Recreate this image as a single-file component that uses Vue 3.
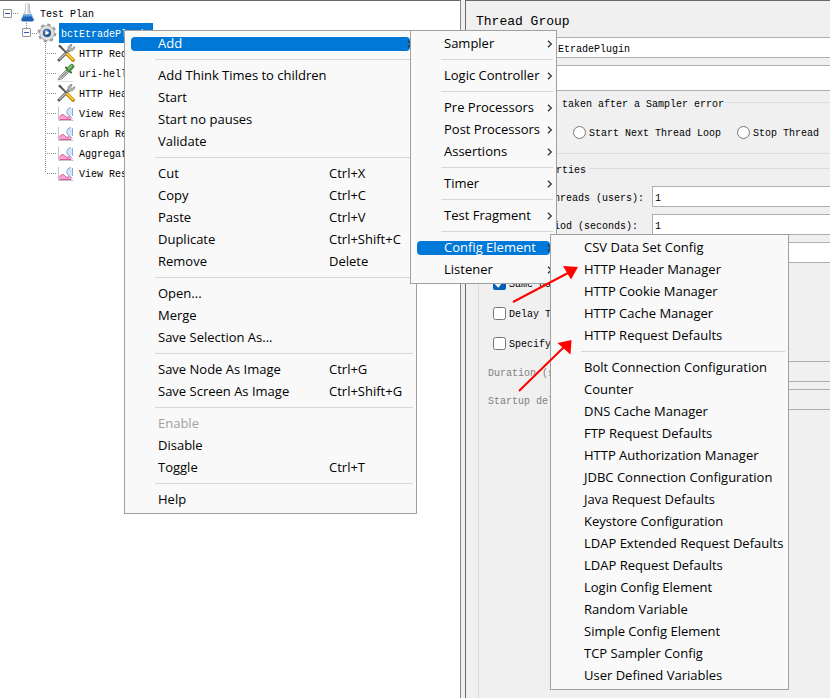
<script setup>
import { ref } from 'vue'

const treeNodes = [
  { icon: 'tools', label: 'HTTP Request Defaults' },
  { icon: 'dropper', label: 'uri-hello' },
  { icon: 'tools', label: 'HTTP Header Manager' },
  { icon: 'graph', label: 'View Results Tree' },
  { icon: 'graph', label: 'Graph Results' },
  { icon: 'graph', label: 'Aggregate Report' },
  { icon: 'graph', label: 'View Results in Table' }
]

const menus = [
  {
    name: 'context',
    groups: [
      [{ label: 'Add', sub: true, active: true }],
      [
        { label: 'Add Think Times to children' },
        { label: 'Start' },
        { label: 'Start no pauses' },
        { label: 'Validate' }
      ],
      [
        { label: 'Cut', keys: 'Ctrl+X' },
        { label: 'Copy', keys: 'Ctrl+C' },
        { label: 'Paste', keys: 'Ctrl+V' },
        { label: 'Duplicate', keys: 'Ctrl+Shift+C' },
        { label: 'Remove', keys: 'Delete' }
      ],
      [{ label: 'Open...' }, { label: 'Merge' }, { label: 'Save Selection As...' }],
      [
        { label: 'Save Node As Image', keys: 'Ctrl+G' },
        { label: 'Save Screen As Image', keys: 'Ctrl+Shift+G' }
      ],
      [
        { label: 'Enable', disabled: true },
        { label: 'Disable' },
        { label: 'Toggle', keys: 'Ctrl+T' }
      ],
      [{ label: 'Help' }]
    ]
  },
  {
    name: 'add',
    groups: [
      [{ label: 'Sampler', sub: true }],
      [{ label: 'Logic Controller', sub: true }],
      [
        { label: 'Pre Processors', sub: true },
        { label: 'Post Processors', sub: true },
        { label: 'Assertions', sub: true }
      ],
      [{ label: 'Timer', sub: true }],
      [{ label: 'Test Fragment', sub: true }],
      [
        { label: 'Config Element', sub: true, active: true },
        { label: 'Listener', sub: true }
      ]
    ]
  },
  {
    name: 'config',
    groups: [
      [
        { label: 'CSV Data Set Config' },
        { label: 'HTTP Header Manager' },
        { label: 'HTTP Cookie Manager' },
        { label: 'HTTP Cache Manager' },
        { label: 'HTTP Request Defaults' }
      ],
      [
        { label: 'Bolt Connection Configuration' },
        { label: 'Counter' },
        { label: 'DNS Cache Manager' },
        { label: 'FTP Request Defaults' },
        { label: 'HTTP Authorization Manager' },
        { label: 'JDBC Connection Configuration' },
        { label: 'Java Request Defaults' },
        { label: 'Keystore Configuration' },
        { label: 'LDAP Extended Request Defaults' },
        { label: 'LDAP Request Defaults' },
        { label: 'Login Config Element' },
        { label: 'Random Variable' },
        { label: 'Simple Config Element' },
        { label: 'TCP Sampler Config' },
        { label: 'User Defined Variables' }
      ]
    ]
  }
]

const name = ref('bctEtradePlugin')
const comments = ref('')
const threads = ref('1')
const rampUp = ref('1')
const loops = ref('')
const onError = ref('')
const sameUser = ref(true)
const delayCreation = ref(false)
const lifetime = ref(false)
</script>

<template>
  <div class="window">
    <nav class="tree" aria-label="Test plan">
      <div class="row root">
        <button class="expander" aria-label="Collapse Test Plan"></button>
        <svg width="8" height="20" viewBox="0 0 8 20"><path d="M1 10.5h6" class="dots" /></svg>
        <svg width="16" height="20" viewBox="0 0 16 20">
          <path d="M5.500 1h4v6l4.200 9q.8 2.500-1.700 2.500H3q-2.500 0-1.700-2.500l4.200-9z" fill="#e6ebf1" stroke="#b4bcc6" stroke-width=".8" />
          <path d="M4 11.500h7l2.500 5q.5 1.700-1.500 1.700H3q-2 0-1.500-1.700z" fill="#1a63b8" />
          <path d="M4 12h7l.8 1.600H3.200z" fill="#5fa4e6" />
          <path d="M6.500 1v10" stroke="#fff" />
          <path d="M9 2v8" stroke="#aab2bd" />
        </svg>
        <span class="name">Test Plan</span>
      </div>
      <div class="row group">
        <span class="branch">
          <svg width="9" height="5" viewBox="0 0 9 5"><path d="M4.500 0v5" class="dots" /></svg>
          <button class="expander" aria-label="Collapse bctEtradePlugin"></button>
        </span>
        <svg width="6" height="20" viewBox="0 0 6 20"><path d="M1 10.500h5" class="dots" /></svg>
        <svg width="20" height="20" viewBox="0 0 20 20">
          <circle cx="10" cy="10" r="8.300" fill="none" stroke="#9c9c9c" stroke-width="2.200" stroke-dasharray="3.260 3.260" />
          <circle cx="10" cy="10" r="6.400" fill="#d8d8d8" stroke="#a2a2a2" stroke-width="2.600" />
          <circle cx="10" cy="10" r="6" fill="none" stroke="#e4e4e4" stroke-width="1.800" />
          <circle cx="10" cy="10" r="4" fill="#23508c" />
          <circle cx="9.500" cy="9" r="2.300" fill="#6c9bcf" />
          <path d="M8.500 7.700l4 2.300-4 2.300z" fill="#fff" />
        </svg>
        <span class="name selected">bctEtradePlugin</span>
      </div>
      <div v-for="(node, i) in treeNodes" :key="i" class="row leaf">
        <svg width="12" height="20" viewBox="0 0 12 20">
          <path :d="i === treeNodes.length - 1 ? 'M.5 0v10' : 'M.5 0v20'" class="dots" />
          <path d="M2 10.500h10" class="dots" />
        </svg>
        <svg v-if="node.icon === 'tools'" width="18" height="20" viewBox="0 0 18 20">
          <path d="M2 17L13 6" stroke="#555" stroke-width="3" stroke-linecap="round" />
          <path d="M2.300 16.500L13 6" stroke="#c4c4c4" stroke-width="1.300" />
          <path d="M11.500 7.500C10 4 12 1.500 15 1.500L13.500 4.500l1.500 1.200 2.500-2.200c.5 3-2 5.500-6 4z" fill="#bdbdbd" stroke="#707070" stroke-width=".7" />
          <path d="M1 3l2-1.500L10.500 10l-1 1z" fill="#555" />
          <path d="M10.500 11.500L16 17" stroke="#a87b00" stroke-width="3.600" stroke-linecap="round" />
          <path d="M10.500 11.200L15.800 16.500" stroke="#f7c52c" stroke-width="2.400" stroke-linecap="round" />
        </svg>
        <svg v-else-if="node.icon === 'dropper'" width="18" height="20" viewBox="0 0 18 20">
          <path d="M2 18.500h14" stroke="#ddd" />
          <path d="M1 17l2-4 7-7 2.500 2.500-7 7z" fill="#cdd1cd" stroke="#777" stroke-width=".8" />
          <path d="M4 14.500l6-6" stroke="#555" />
          <path d="M9 4.500l5 5" stroke="#376b2d" stroke-width="2" stroke-linecap="round" />
          <path d="M11.800 6.500l3-3" stroke="#4c8e42" stroke-width="5" stroke-linecap="round" />
          <path d="M12 5.500l2.500-2.500" stroke="#86c478" stroke-width="1.800" stroke-linecap="round" />
        </svg>
        <svg v-else width="18" height="20" viewBox="0 0 18 20">
          <path d="M1.500 4v13.500h15" fill="none" stroke="#c4c4c8" />
          <path d="M2 15q2-4 4-3.500t3.500 2.500l3.500-2 2 5H2z" fill="#f6a9cf" />
          <path d="M2 14.500q2.500-3.500 4-3t3 2.500 3 0M3 16.500h11" fill="none" stroke="#d9559c" />
          <ellipse cx="12.800" cy="9" rx="3" ry="4" fill="#d4e5fa" />
          <path d="M14 4.500q-4 .5-4.200 4t3 4.500l2.700 2.500M15.500 5v8" fill="none" stroke="#8aa9da" />
        </svg>
        <span class="name">{{ node.label }}</span>
      </div>
    </nav>

    <main class="editor">
      <h1>Thread Group</h1>
      <div class="field named">
        <input v-model="name" type="text" aria-label="Name" />
      </div>
      <div class="field named comments">
        <input v-model="comments" type="text" aria-label="Comments" />
      </div>

      <fieldset class="action">
        <legend>Action to be taken after a Sampler error</legend>
        <div class="radios">
          <label><input v-model="onError" type="radio" name="error" value="continue" /><span>Continue</span></label>
          <label><input v-model="onError" type="radio" name="error" value="next" /><span>Start Next Thread Loop</span></label>
          <label><input v-model="onError" type="radio" name="error" value="stop" /><span>Stop Thread</span></label>
        </div>
      </fieldset>

      <fieldset class="props">
        <legend>Thread Properties</legend>
        <div class="field">
          <label for="threads">Number of Threads (users):</label>
          <input id="threads" v-model="threads" type="text" />
        </div>
        <div class="field">
          <label for="ramp">Ramp-up period (seconds):</label>
          <input id="ramp" v-model="rampUp" type="text" />
        </div>
        <div class="field loops">
          <input v-model="loops" type="text" aria-label="Loop Count" />
        </div>
        <div class="checks">
          <label class="check"><input v-model="sameUser" type="checkbox" /><span>Same user on each iteration</span></label>
          <label class="check"><input v-model="delayCreation" type="checkbox" /><span>Delay Thread creation until needed</span></label>
          <label class="check"><input v-model="lifetime" type="checkbox" /><span>Specify Thread lifetime</span></label>
        </div>
        <div class="field off">
          <label for="duration">Duration (seconds):</label>
          <input id="duration" type="text" disabled />
        </div>
        <div class="field off">
          <label for="delay">Startup delay (seconds):</label>
          <input id="delay" type="text" disabled />
        </div>
      </fieldset>
    </main>

    <div v-for="menu in menus" :key="menu.name" class="menu" :class="menu.name" role="menu">
      <div v-for="(group, g) in menu.groups" :key="g" class="section">
        <button
          v-for="item in group"
          :key="item.label"
          class="item"
          :class="{ active: item.active }"
          :disabled="item.disabled"
          role="menuitem"
        >
          <span class="pill">
            <span class="text">{{ item.label }}</span>
            <span v-if="item.keys" class="keys">{{ item.keys }}</span>
            <svg v-if="item.sub" class="chevron" width="6" height="8" viewBox="0 0 6 8">
              <path d="M1 .7L4.300 4 1 7.300" fill="none" stroke="#333" stroke-width="1.300" />
            </svg>
          </span>
        </button>
      </div>
    </div>

    <svg class="pointers" width="70" height="130" viewBox="0 0 70 130" aria-hidden="true">
      <path d="M1 37L56 8M7 126L52 82" stroke="#f00" stroke-width="2" fill="none" />
      <path d="M66 2L51 1l8 13.500zM59.500 75l-14 3 13 11.500z" fill="#f00" />
    </svg>
  </div>
</template>

<style>
body {
  margin: 0;
}
</style>

<style scoped>
.window {
  position: relative;
  display: grid;
  grid-template-columns: 461px 1fr;
  column-gap: 4px;
  min-height: 100vh;
  overflow: hidden;
  background: #f0f0f0;
  color: #000;
  font: 10px/12px "Liberation Mono", monospace;
}

button,
input {
  box-sizing: border-box;
  margin: 0;
  font: inherit;
  color: inherit;
}

/* Tree */
.tree {
  padding-top: 2px;
  background: #fff;
  border-top: 1px solid #696969;
  border-right: 1px solid #828790;
}

.row {
  display: flex;
  align-items: center;
  height: 20px;
  white-space: nowrap;
}

.row svg {
  flex: none;
}

.root {
  padding-left: 3px;
}

.group {
  padding-left: 22px;
}

.leaf {
  padding-left: 45px;
}

.branch {
  display: flex;
  flex-direction: column;
  height: 20px;
}

.expander {
  display: grid;
  place-items: center;
  flex: none;
  width: 9px;
  height: 9px;
  padding: 0;
  background: #fff;
  border: 1px solid #919191;
  border-radius: 1px;
}

.expander::before {
  content: "";
  width: 5px;
  height: 1px;
  background: #2f56b5;
}

.dots {
  fill: none;
  stroke: #8a8a8a;
  stroke-dasharray: 1 1;
}

.name {
  box-sizing: border-box;
  height: 20px;
  padding: 2px 2px 0;
  margin-left: 2px;
  line-height: 20px;
}

.selected {
  background: #0078d7;
  color: #fff;
}

/* Editor */
.editor {
  display: flex;
  flex-direction: column;
  min-width: 0;
  padding: 10px 0 0 10px;
  border-top: 1px solid #696969;
  border-left: 1px solid #696969;
}

h1 {
  margin: 0 0 6px;
  padding-top: 2px;
  font-size: 13px;
  font-weight: 400;
  line-height: 18px;
}

.field {
  display: flex;
  align-items: center;
  height: 21px;
  white-space: nowrap;
}

.field input {
  flex: 1;
  min-width: 0;
  height: 100%;
  padding: 3px 2px 0;
  background: #fff;
  border: 1px solid #abadb3;
  border-right: 0;
  border-radius: 0;
}

.field label {
  width: 164px;
}

.field label,
.radios span,
.check span {
  padding-top: 4px;
}

.named {
  padding-left: 61px;
}

.comments {
  height: 26px;
  margin-top: 7px;
}

fieldset {
  min-width: 0;
  margin: 0 0 0 2px;
  border: 1px solid #dcdcdc;
  border-right: 0;
}

legend {
  margin-left: 2px;
  padding: 5px 3px 0;
  line-height: 8px;
}

.action {
  margin-top: 5px;
  padding: 13px 0 11px;
}

.radios {
  display: flex;
  gap: 16px;
  height: 20px;
  padding-left: 14px;
  white-space: nowrap;
}

.radios label,
.check {
  display: flex;
  align-items: center;
  gap: 3px;
}

.radios input,
.check input {
  flex: none;
  width: 13px;
  height: 13px;
  accent-color: #005fb8;
}

.props {
  display: flex;
  flex: 1;
  flex-direction: column;
  margin-top: 8px;
  padding: 11px 0 0 9px;
  border-bottom: 0;
}

.props legend {
  margin-left: -7px;
}

.props .field + .field {
  margin-top: 7px;
}

.loops {
  padding-left: 164px;
}

.checks {
  margin: 5px 0 3px 5px;
  white-space: nowrap;
}

.check {
  height: 30px;
}

.off {
  color: #808080;
}

.field.off input {
  background: #f0f0f0;
}

/* Menus */
.menu {
  position: absolute;
  box-sizing: border-box;
  padding: 2px 0;
  background: #f9f9f9;
  border: 1px solid #a0a0a0;
  font: 13px/22px "Open Sans", "Noto Sans", sans-serif;
}

.context {
  top: 30px;
  left: 124px;
  width: 293px;
}

.add {
  top: 30px;
  left: 410px;
  width: 147px;
}

.config {
  top: 234px;
  left: 550px;
  width: 239px;
}

.section + .section::before {
  content: "";
  display: block;
  height: 1px;
  margin: 4px 3px 5px 30px;
  background: #d7d7d7;
}

.item {
  display: flex;
  align-items: center;
  width: 100%;
  height: 22px;
  padding: 0 6px;
  background: none;
  border: 0;
  text-align: left;
}

.item:disabled {
  color: #a0a0a0;
}

.pill {
  display: flex;
  box-sizing: border-box;
  position: relative;
  width: 100%;
  height: 14px;
  padding-left: 27px;
  border-radius: 4px;
  line-height: 12px;
  white-space: nowrap;
}

.text {
  flex: none;
  min-width: 171px;
}

.add .text,
.config .text {
  min-width: 0;
}

.active .pill {
  background: #0078d7;
  color: #fff;
}

.chevron {
  position: absolute;
  right: -3px;
  top: 3px;
}

.pointers {
  position: absolute;
  top: 265px;
  left: 512px;
}
</style>
